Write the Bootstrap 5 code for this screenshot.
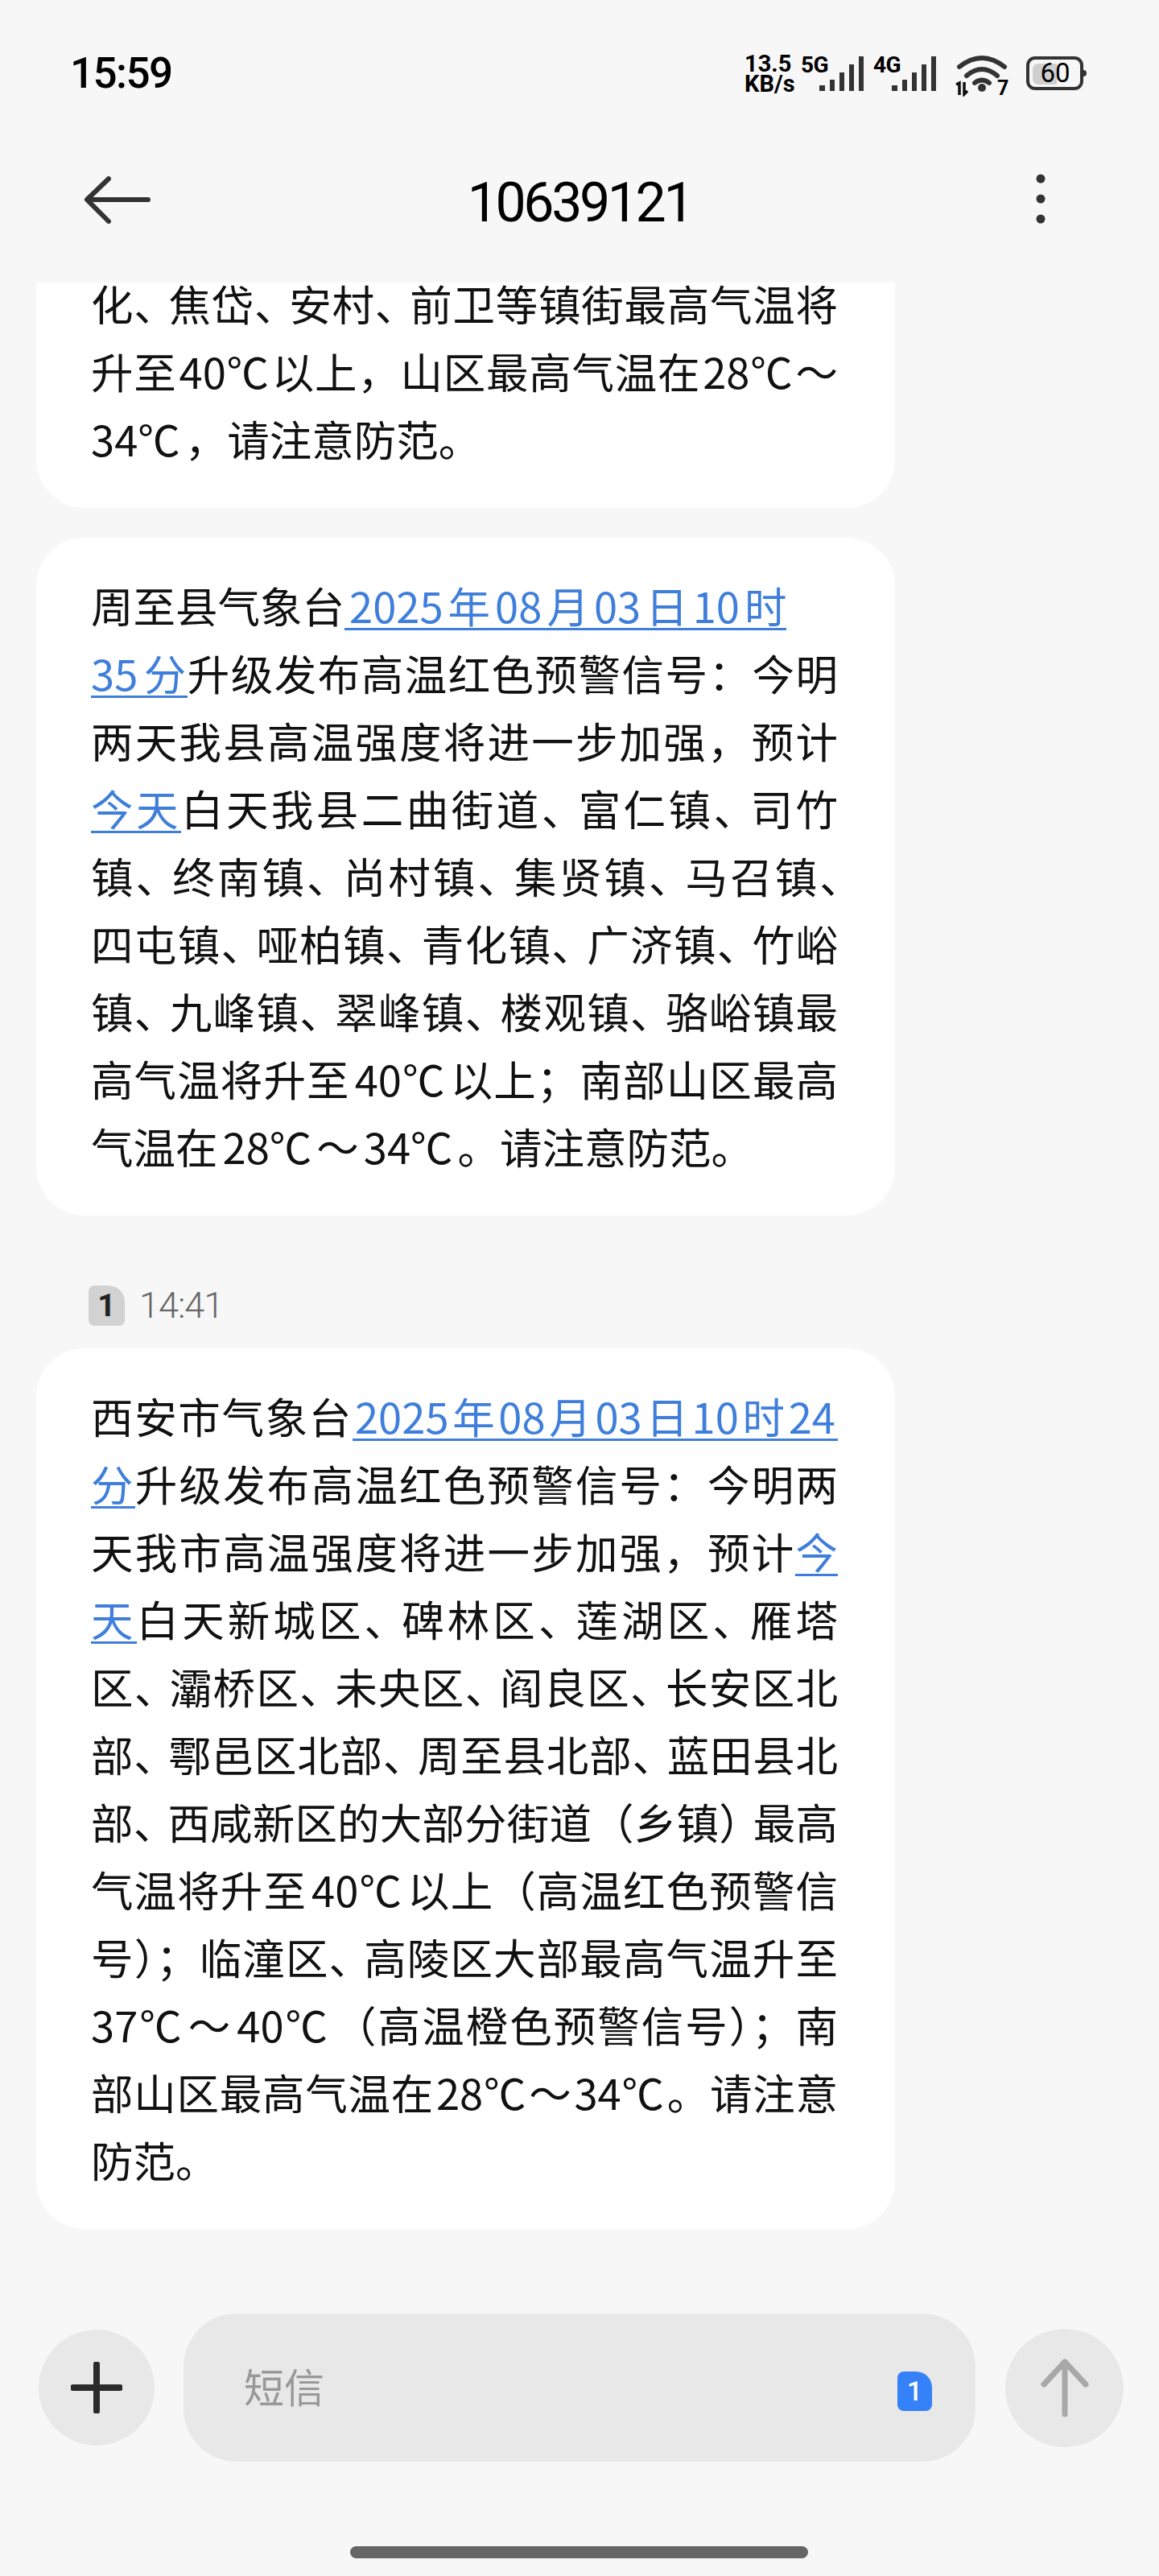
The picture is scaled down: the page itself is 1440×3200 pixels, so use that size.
<!DOCTYPE html>
<html lang="zh-CN">
<head>
<meta charset="utf-8">
<title>10639121</title>
<link href="https://cdn.jsdelivr.net/npm/bootstrap@5.3.0/dist/css/bootstrap.min.css" rel="stylesheet">
<style>
html,body{margin:0;background:#f7f7f7}
.phone{width:1440px;height:3200px;background:#f7f7f7;font-family:"Noto Sans CJK SC","Noto Sans",sans-serif;color:#111}
.stat-row{height:175px;padding:66px 90px 0 87px}
.clock{font:500 53px/54px Roboto,sans-serif;letter-spacing:-1.6px;color:#000;margin-top:-2px}
.speed{font:700 29px/25px Roboto,sans-serif;width:70px;color:#000;margin-top:1px;white-space:nowrap}
.st-ic{display:block;flex:none}
.net-ic{position:relative;width:90px;height:52px;flex:none}
.net-ic.wide{width:100px}
.net-lbl{position:absolute;left:0;top:0;font:700 28px/30px Roboto,sans-serif;letter-spacing:-.5px;color:#000}
.wifi-ic{position:relative;width:90px;height:54px;flex:none}
.wifi-7{position:absolute;left:54px;top:31px;font:700 25px/26px Roboto,sans-serif;color:#000}
.batt-ic{position:relative;width:75px;height:44px;flex:none;margin-top:4px}
.batt-num{position:absolute;left:8px;width:56px;top:2px;text-align:center;font:400 33px/38px Roboto,sans-serif;color:#000}
.top-head{height:176px;position:relative}
.title-num{font:400 68px/80px Roboto,sans-serif;letter-spacing:-3.4px;color:#000;width:100%;text-align:center;margin-top:37px}
.back-ic,.more-ic{position:absolute;display:block}
.back-ic{left:103px;top:43px}
.more-ic{left:1283px;top:35px}
.msgs{height:2523px;padding-bottom:105px;overflow:hidden}
.bub{flex:none;width:1067px;margin-left:45px;background:#fff;border-radius:60px;padding:41px 71px 45px 68px;font-size:52.5px;line-height:84px;font-weight:400;color:#111;text-align:justify;text-align-last:justify}
.bub+.bub{margin-top:37px}
.bub a{color:#3f7fdb;text-decoration:none;background-image:linear-gradient(#3f7fdb,#3f7fdb);background-repeat:no-repeat;background-size:100% 3px;background-position:0 calc(100% - 6px);-webkit-box-decoration-break:clone;box-decoration-break:clone}
.nat{text-align-last:left;white-space:nowrap}
.pn{letter-spacing:-10px}
.pe{letter-spacing:-30px}
.dg{margin:0 6px}
.dt{margin:0 3px}
.ds{margin-right:6px}
.stamp{flex:none;height:50px;margin:87px 0 28px 110px}
.sim-tag{width:45px;height:50px;background:#d2d2d2;border-radius:7px 20px 7px 7px;font:700 39px/50px Roboto,sans-serif;color:#222;text-align:center}
.stamp-time{font:300 45px/50px Roboto,sans-serif;color:#666;margin-left:18px;letter-spacing:-1px}
.composer{height:184px}
.round-btn{flex:none;border-radius:50%;background:#e8e8e8}
.btn-plus{margin-left:48px;width:144px;height:144px}
.btn-send{margin-left:37px;width:147px;height:147px}
.entry{flex:none;width:984px;height:184px;margin-left:36px;background:#e8e8e8;border-radius:66px;padding:0 54px 0 75px}
.hint{font-size:50px;font-weight:400;color:#999;margin-top:-6px}
.sim-blue{width:43px;height:49px;background:#3481f8;border-radius:8px 20px 8px 8px;color:#fff;font:500 34px/49px Roboto,sans-serif;text-align:center;margin-top:8px}
.home-zone{height:142px;padding-top:105px}
.home-bar{width:569px;height:15px;border-radius:8px;background:#666;margin-left:435px}
</style>
</head>
<body>
<div class="phone d-flex flex-column">
  <div class="stat-row d-flex justify-content-between align-items-start">
    <div class="clock">15:59</div>
    <div class="d-flex align-items-start">
      <div class="speed">13.5<br>KB/s</div>
      <div class="net-ic"><span class="net-lbl">5G</span><svg class="st-ic" width="79" height="52" viewBox="0 0 79 52"><g fill="#333"><rect x="23" y="40" width="7" height="7"/><rect x="36" y="33" width="6" height="14"/><rect x="48" y="24" width="6" height="23"/><rect x="60" y="14" width="6" height="33"/><rect x="72" y="4" width="6" height="43"/></g></svg></div>
      <div class="net-ic wide"><span class="net-lbl">4G</span><svg class="st-ic" width="79" height="52" viewBox="0 0 79 52"><g fill="#333"><rect x="23" y="40" width="7" height="7"/><rect x="36" y="33" width="6" height="14"/><rect x="48" y="24" width="6" height="23"/><rect x="60" y="14" width="6" height="33"/><rect x="72" y="4" width="6" height="43"/></g></svg></div>
      <div class="wifi-ic"><svg class="st-ic" width="70" height="54" viewBox="0 0 70 54"><g fill="none" stroke="#333" stroke-width="6" stroke-linecap="round"><path d="M7 17Q35 -5 63 17"/><path d="M16 28Q35 12 54 28"/><path d="M26 37Q35 30 44 37"/></g><circle cx="35" cy="43" r="5" fill="#333"/><path d="M3 39l4-2v15M13 36v15l4-4" fill="none" stroke="#111" stroke-width="3.5"/></svg><span class="wifi-7">7</span></div>
      <div class="batt-ic"><svg class="st-ic" width="75" height="44" viewBox="0 0 75 44"><rect x="2" y="2" width="67" height="38" rx="9" fill="none" stroke="#333" stroke-width="4"/><path d="M15 9h23v26H15a7 7 0 0 1-7-7V16a7 7 0 0 1 7-7z" fill="#cfcfcf"/><path d="M71 17a4 4 0 0 1 0 8z" fill="#333"/></svg><span class="batt-num">60</span></div>
    </div>
  </div>
  <header class="top-head d-flex align-items-start">
    <svg class="back-ic" width="86" height="62" viewBox="0 0 86 62"><path d="M6 30H81M32 4L5 30L32 57" fill="none" stroke="#333" stroke-width="6" stroke-linecap="round" stroke-linejoin="round"/></svg>
    <div class="title-num">10639121</div>
    <svg class="more-ic" width="20" height="72" viewBox="0 0 20 72"><g fill="#333"><circle cx="10" cy="12" r="5.5"/><circle cx="10" cy="37" r="5.5"/><circle cx="10" cy="62" r="5.5"/></g></svg>
  </header>
  <main class="msgs d-flex flex-column justify-content-end">
    <div class="bub">化<span class="pn">、</span>焦岱<span class="pn">、</span>安村<span class="pn">、</span>前卫等镇街最高气温将<br>升至<span class="dt">40℃</span>以上，山区最高气温在<span class="dt">28℃</span>～<div class="nat"><span class="ds">34℃</span>，请注意防范。</div></div>
    <div class="bub"><div class="nat">周至县气象台<a href="#"><span class="dg">2025</span>年<span class="dg">08</span>月<span class="dg">03</span>日<span class="dg">10</span>时</a></div><a href="#"><span class="ds">35</span>分</a>升级发布高温红色预警信号：今明<br>两天我县高温强度将进一步加强，预计<br><a href="#">今天</a>白天我县二曲街道<span class="pn">、</span>富仁镇<span class="pn">、</span>司竹<br>镇<span class="pn">、</span>终南镇<span class="pn">、</span>尚村镇<span class="pn">、</span>集贤镇<span class="pn">、</span>马召镇<span class="pe">、</span><br>四屯镇<span class="pn">、</span>哑柏镇<span class="pn">、</span>青化镇<span class="pn">、</span>广济镇<span class="pn">、</span>竹峪<br>镇<span class="pn">、</span>九峰镇<span class="pn">、</span>翠峰镇<span class="pn">、</span>楼观镇<span class="pn">、</span>骆峪镇最<br>高气温将升至<span class="dg">40℃</span>以上；南部山区最高<div class="nat">气温在<span class="dg">28℃</span>～<span class="dg">34℃</span>。请注意防范。</div></div>
    <div class="stamp d-flex align-items-center"><div class="sim-tag">1</div><div class="stamp-time">14:41</div></div>
    <div class="bub">西安市气象台<a href="#"><span class="dt">2025</span>年<span class="dt">08</span>月<span class="dt">03</span>日<span class="dt">10</span>时<span class="dt">24</span><br>分</a>升级发布高温红色预警信号：今明两<br>天我市高温强度将进一步加强，预计<a href="#">今<br>天</a>白天新城区<span class="pn">、</span>碑林区<span class="pn">、</span>莲湖区<span class="pn">、</span>雁塔<br>区<span class="pn">、</span>灞桥区<span class="pn">、</span>未央区<span class="pn">、</span>阎良区<span class="pn">、</span>长安区北<br>部<span class="pn">、</span>鄠邑区北部<span class="pn">、</span>周至县北部<span class="pn">、</span>蓝田县北<br>部<span class="pn">、</span>西咸新区的大部分街道（乡镇<span class="pn">）</span>最高<br>气温将升至<span class="dg">40℃</span>以上（高温红色预警信<br>号）；临潼区<span class="pn">、</span>高陵区大部最高气温升至<br><span class="ds">37℃</span>～<span class="dg">40℃</span>（高温橙色预警信号）；南<br>部山区最高气温在<span class="dt">28℃</span>～<span class="dt">34℃</span>。请注意<div class="nat">防范。</div></div>
  </main>
  <div class="composer d-flex align-items-center">
    <div class="round-btn btn-plus d-flex align-items-center justify-content-center"><svg width="64" height="64" viewBox="0 0 64 64"><path d="M32 3V61M3 32H61" stroke="#2b2b2b" stroke-width="8" stroke-linecap="round"/></svg></div>
    <div class="entry d-flex align-items-center justify-content-between"><span class="hint">短信</span><div class="sim-blue">1</div></div>
    <div class="round-btn btn-send d-flex align-items-center justify-content-center"><svg width="60" height="74" viewBox="0 0 60 74"><path d="M30 5V70M4 33L30 5L56 33" fill="none" stroke="#a8a8a8" stroke-width="7" stroke-linecap="round" stroke-linejoin="round"/></svg></div>
  </div>
  <div class="home-zone"><div class="home-bar"></div></div>
</div>
<script src="https://cdn.jsdelivr.net/npm/bootstrap@5.3.0/dist/js/bootstrap.bundle.min.js"></script>
</body>
</html>
